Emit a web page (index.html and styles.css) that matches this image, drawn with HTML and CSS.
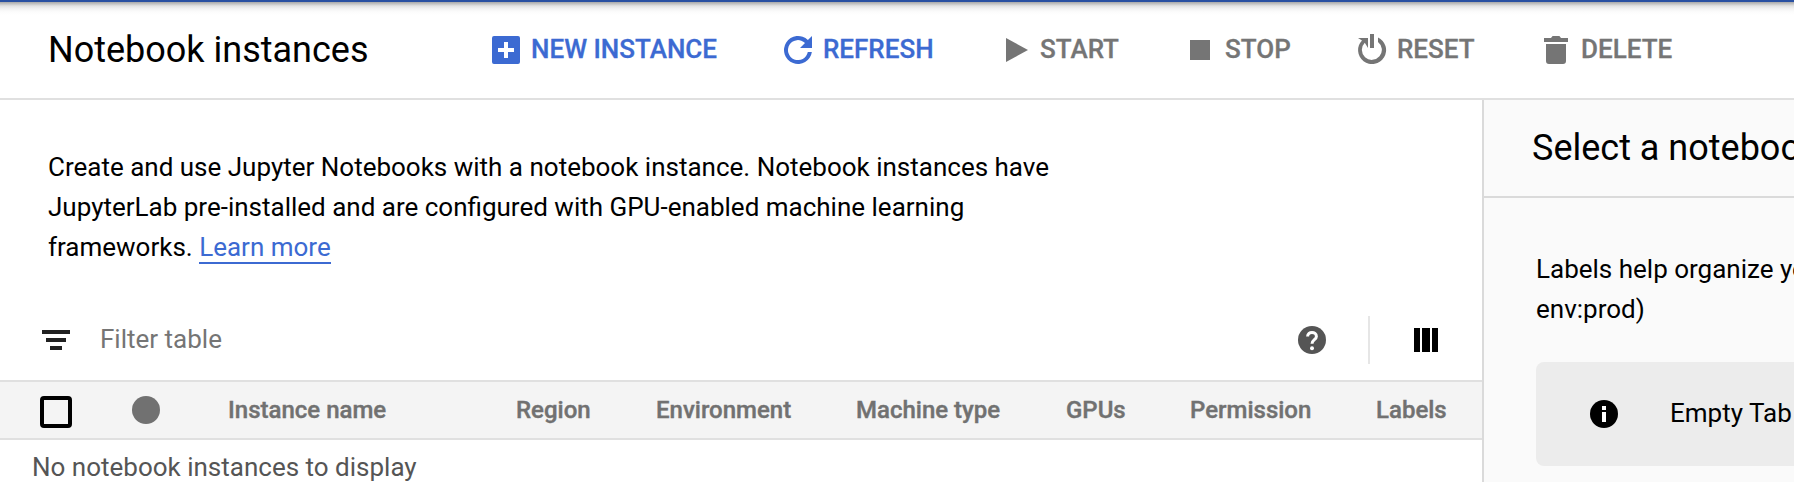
FILE: index.html
```html
<!DOCTYPE html>
<html lang="en">
<head>
<meta charset="utf-8">
<title>Notebook instances</title>
<link rel="stylesheet" href="styles.css">
</head>
<body>
<div class="topbar"></div>
<header class="header">
  <h1 class="title">Notebook instances</h1>
  <nav class="actions">
    <a class="action primary"><svg class="icon" viewBox="0 0 18 18"><path fill-rule="evenodd" d="M3 2h12a1 1 0 0 1 1 1v12a1 1 0 0 1-1 1H3a1 1 0 0 1-1-1V3a1 1 0 0 1 1-1zM8 5v3H5v2h3v3h2v-3h3V8h-3V5z"/></svg>NEW INSTANCE</a>
    <a class="action primary"><svg class="icon" viewBox="0 0 18 18"><path d="M13.95 4.05A7 7 0 1 0 15.93 10H13.9A5 5 0 1 1 12.5 5.5L10 8H16V2z"/></svg>REFRESH</a>
    <a class="action start"><svg class="icon" viewBox="0 0 18 18"><path d="M5 3v12l11-6z"/></svg>START</a>
    <a class="action"><svg class="icon" viewBox="0 0 18 18"><path d="M4 4h10v10H4z"/></svg>STOP</a>
    <a class="action"><svg class="icon" viewBox="0 0 18 18"><path d="M8 1h2v7H8z"/><path d="M2 3h5v5L5.4 5.4A5 5 0 1 0 12 5V2.7A7 7 0 1 1 4 4.2z"/></svg>RESET</a>
    <a class="action"><svg class="icon" viewBox="0 0 18 18"><path d="M4 6h10v8.500a1.500 1.500 0 0 1-1.500 1.500h-7A1.500 1.500 0 0 1 4 14.500zM3 3h3.500l.8-1h3.400l.8 1H15v2H3z"/></svg>DELETE</a>
  </nav>
</header>
<div class="content">
  <main class="main">
    <p class="intro">Create and use Jupyter Notebooks with a notebook instance. Notebook instances have<br>JupyterLab pre-installed and are configured with GPU-enabled machine learning<br>frameworks. <a class="link">Learn more</a></p>
    <div class="filter">
      <svg class="filter-icon" viewBox="0 0 28 20"><path d="M0 0h28v4H0zM4 8h20v4H4zM8 16h12v4H8z"/></svg>
      <span class="filter-text">Filter table</span>
      <svg class="help" viewBox="0 0 28 28"><circle cx="14" cy="14" r="14"/><path class="mark" d="M9.600 10.600C9.600 4.900 18.400 5.100 18.400 10.400C18.400 13.600 14 13.800 14 17.800"/><circle class="dot" cx="14" cy="22.300" r="2"/></svg>
      <span class="divider"></span>
      <svg class="columns" viewBox="0 0 24 24"><path d="M0 0h6v24H0zM8 0h8v24H8zM18 0h6v24h-6z"/></svg>
    </div>
    <div class="thead">
      <span class="checkbox"></span>
      <span class="status"></span>
      <span>Instance name</span>
      <span>Region</span>
      <span>Environment</span>
      <span>Machine type</span>
      <span>GPUs</span>
      <span>Permission</span>
      <span>Labels</span>
    </div>
    <p class="empty">No notebook instances to display</p>
  </main>
  <aside class="panel">
    <h2 class="panel-title">Select a notebook</h2>
    <p class="panel-text">Labels help organize yo<br>env:prod)</p>
    <div class="info">
      <svg class="info-icon" viewBox="0 0 28 28"><circle cx="14" cy="14" r="14"/><path class="mark" d="M12 6h4v4h-4zM12 12h4v10h-4z"/></svg>
      <span class="info-text">Empty Tab</span>
    </div>
  </aside>
</div>
</body>
</html>
```
FILE: styles.css
```css
* { box-sizing: border-box; }
body {
  margin: 0;
  height: 482px;
  overflow: hidden;
  display: flex;
  flex-direction: column;
  background: #fff;
  color: #000;
  font: 26px/40px Roboto, sans-serif;
}
h1, h2, p { margin: 0; font-weight: 400; }
svg { display: block; flex: none; }

.topbar { flex: none; height: 2px; background: #2a51a2; }
.header {
  flex: none;
  height: 98px;
  display: flex;
  padding-left: 48px;
  border-bottom: 2px solid #e0e0e0;
  background: linear-gradient(#a9a9a9 0, #c6c6c6 2px, #e4e4e4 4px, #f4f4f4 7px, #fcfcfc 10px, #fff 13px);
}
.title { width: 440px; padding-top: 28px; font-size: 36px; }
.actions {
  display: grid;
  grid-template-columns: 292px 216px 186px 172px 184px 200px;
}
.action {
  display: flex;
  gap: 7px;
  padding-top: 27px;
  color: #757575;
  fill: #757575;
  font-weight: 500;
  -webkit-text-stroke: .3px;
  white-space: nowrap;
}
.start { gap: 8px; }
.icon { width: 36px; height: 36px; margin-top: 3px; }
.primary { color: #3c6ad2; fill: #3c6ad2; }

.content { flex: 1; min-height: 0; display: flex; }
.main { width: 1482px; flex: none; }
.intro { width: 1100px; height: 216px; padding: 47px 0 0 48px; }
.link { border-bottom: 2px solid #3c6ad2; color: #3c6ad2; }
.filter {
  height: 64px;
  display: flex;
  align-items: center;
  padding: 0 44px 16px 42px;
}
.filter-icon { width: 28px; height: 20px; fill: #212121; }
.filter-text { flex: 1; margin-left: 30px; padding-bottom: 2px; color: #757575; }
.help { width: 28px; height: 28px; fill: #555; }
.help .mark { fill: none; stroke: #fff; stroke-width: 3; }
.help .dot { fill: #fff; }
.divider { width: 2px; height: 48px; margin: 0 44px 0 42px; background: #e6e6e6; }
.columns { width: 24px; height: 24px; }
.thead {
  height: 60px;
  display: grid;
  grid-template-columns: 92px 96px 288px 140px 200px 210px 124px 186px 100px;
  padding: 14px 0 0 40px;
  border: solid #e0e0e0;
  border-width: 2px 0;
  background: #f4f4f4;
  color: #717171;
  font-size: 24px;
  font-weight: 500;
  line-height: 28px;
  -webkit-text-stroke: .4px;
}
.checkbox { width: 32px; height: 32px; border: 4px solid #000; border-radius: 4px; }
.status { width: 28px; height: 28px; border-radius: 50%; background: #717171; }
.empty { padding: 7px 0 0 32px; color: #555; }

.panel {
  flex: 1;
  min-width: 0;
  overflow: hidden;
  border-left: 2px solid #dadada;
  background: #fafafa;
  white-space: nowrap;
}
.panel-title {
  height: 98px;
  padding: 28px 0 0 48px;
  border-bottom: 2px solid #dadada;
  font-size: 36px;
}
.panel-text { height: 164px; padding: 51px 0 0 52px; }
.info {
  height: 104px;
  width: 400px;
  margin-left: 52px;
  padding-left: 54px;
  display: flex;
  align-items: center;
  gap: 52px;
  border-radius: 8px;
  background: #ececec;
}
.info-icon { width: 28px; height: 28px; }
.info-icon .mark { fill: #fff; }
.info-text { padding-bottom: 2px; }
```
